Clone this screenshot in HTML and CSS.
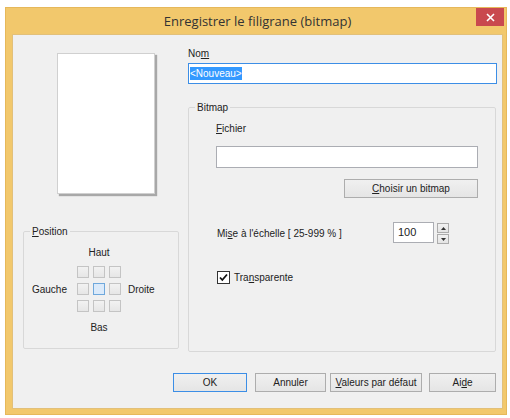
FILE: index.html
```html
<!DOCTYPE html>
<html lang="fr">
	<head>
		<meta charset="UTF-8" />
		<meta name="viewport" content="width=device-width, initial-scale=1.0" />
		<title>Enregistrer le filigrane (bitmap)</title>
		<link rel="stylesheet" href="styles.css">
	</head>
	<body>
		<div class="window">
			<div class="titlebar">
				<span class="title">Enregistrer le filigrane (bitmap)</span>
				<button class="close-button" aria-label="Fermer">
					<svg width="9" height="9" viewBox="0 0 9 9">
						<path d="M1 1 L8 8 M8 1 L1 8" stroke="#fff" stroke-width="1.6" />
					</svg>
				</button>
			</div>

			<div class="client">
				<div class="main">
					<div class="left-col">
						<div class="preview"></div>

						<fieldset class="group position-group">
							<legend><u>P</u>osition</legend>
							<div class="compass">
								<span class="haut">Haut</span>
								<span class="gauche">Gauche</span>
								<div class="cells">
									<span class="cell"></span>
									<span class="cell"></span>
									<span class="cell"></span>
									<span class="cell"></span>
									<span class="cell selected"></span>
									<span class="cell"></span>
									<span class="cell"></span>
									<span class="cell"></span>
									<span class="cell"></span>
								</div>
								<span class="droite">Droite</span>
								<span class="bas">Bas</span>
							</div>
						</fieldset>
					</div>

					<div class="right-col">
						<label class="name-label">No<u>m</u></label>
						<div class="textbox name-box"><span class="selection">&lt;Nouveau&gt;</span></div>

						<fieldset class="group bitmap-group">
							<legend>Bitmap</legend>
							<div class="bitmap-body">
								<label class="file-label"><u>F</u>ichier</label>
								<div class="textbox file-box"></div>
								<div class="choose-row">
									<button class="btn choose-btn"><u>C</u>hoisir un bitmap</button>
								</div>

								<div class="scale-row">
									<span class="scale-label">Mi<u>s</u>e à l'échelle [ 25-999 % ]</span>
									<div class="spin">
										<div class="textbox spin-box">100</div>
										<div class="spin-buttons">
											<span class="spin-btn">
												<svg width="5" height="3" viewBox="0 0 5 3"><path d="M0 3 L2.5 0 L5 3 Z" fill="#333" /></svg>
											</span>
											<span class="spin-btn">
												<svg width="5" height="3" viewBox="0 0 5 3"><path d="M0 0 L5 0 L2.5 3 Z" fill="#333" /></svg>
											</span>
										</div>
									</div>
								</div>

								<label class="check-row">
									<span class="checkbox">
										<svg width="11" height="11" viewBox="0 0 11 11">
											<path d="M2 5.5 L4.3 8 L9 2.5" fill="none" stroke="#111" stroke-width="1.8" />
										</svg>
									</span>
									<span>Tra<u>n</u>sparente</span>
								</label>
							</div>
						</fieldset>
					</div>
				</div>

				<div class="buttons">
					<button class="btn default-btn ok-btn">OK</button>
					<button class="btn cancel-btn">Annuler</button>
					<button class="btn defaults-btn"><u>V</u>aleurs par défaut</button>
					<button class="btn help-btn">Ai<u>d</u>e</button>
				</div>
			</div>
		</div>
	</body>
</html>
```

FILE: styles.css
```css
* {
	margin: 0;
	padding: 0;
	box-sizing: border-box;
}

body {
	background: #fff;
	font-family: "Liberation Sans", Arial, sans-serif;
	font-size: 10px;
	line-height: 13px;
	color: #222;
}

u {
	text-decoration: underline;
	text-underline-offset: 1px;
}

/* window frame */
.window {
	margin: 7px 0 0 5px;
	width: 502px;
	height: 408px;
	background: #f2c86c;
	border: 1px solid #e6b85a;
	padding: 0 3px 5px 6px;
	display: flex;
	flex-direction: column;
}

.titlebar {
	height: 26px;
	display: flex;
	align-items: center;
	justify-content: center;
	position: relative;
}

.title {
	font-family: "Open Sans", "Noto Sans", sans-serif;
	font-size: 13px;
	color: #333;
	margin-top: 1px;
}

.close-button {
	position: absolute;
	right: -1px;
	top: 0;
	width: 28px;
	height: 18px;
	border: none;
	background: #c9494e;
	display: flex;
	align-items: center;
	justify-content: center;
}

.client {
	flex: 1;
	background: #f0f0f0;
	border: 1px solid #e2c07a;
	display: flex;
	flex-direction: column;
}

.main {
	display: flex;
}

/* left column: preview and position */
.left-col {
	width: 175px;
	display: flex;
	flex-direction: column;
}

.preview {
	width: 98px;
	height: 141px;
	margin: 18px 0 0 44px;
	background: #fff;
	border: 1px solid #d0d0d0;
	box-shadow: 2px 2px 1px #a8a8a8;
}

.group {
	border: 1px solid #d8d8d8;
	border-radius: 2px;
}

.group legend {
	padding: 0 2px;
	margin-left: 6px;
	line-height: 13px;
}

.position-group {
	margin: 31px 0 0 10px;
	width: 156px;
	height: 124px;
}

.compass {
	display: grid;
	grid-template-columns: 53px 44px 1fr;
	margin-top: 8px;
}

.haut,
.bas {
	grid-column: 2;
	text-align: center;
}

.haut {
	margin-bottom: 7px;
}

.bas {
	margin-top: 9px;
}

.gauche {
	grid-column: 1;
	text-align: right;
	padding-right: 10px;
	align-self: center;
}

.droite {
	grid-column: 3;
	padding-left: 7px;
	align-self: center;
}

.cells {
	grid-column: 2;
	display: grid;
	grid-template-columns: repeat(3, 12px);
	grid-auto-rows: 12px;
	column-gap: 4px;
	row-gap: 5px;
}

.cell {
	border: 1px solid #c4c4c4;
	background: linear-gradient(#f2f2f2, #e6e6e6);
}

.cell.selected {
	border-color: #6fa8dc;
	background: #dbeafa;
}

/* right column: name and bitmap */
.right-col {
	width: 309px;
	display: flex;
	flex-direction: column;
}

.name-label {
	margin-top: 12px;
}

.textbox {
	background: #fff;
	border: 1px solid #abadb3;
}

.name-box {
	margin-top: 3px;
	height: 21px;
	border-color: #3c8ee6;
	padding: 3px 1px;
}

.selection {
	background: #3399ff;
	color: #fff;
	padding: 1px 0;
}

.bitmap-group {
	margin-top: 17px;
	width: 308px;
	height: 251px;
}

.bitmap-body {
	padding-left: 27px;
	display: flex;
	flex-direction: column;
}

.file-label {
	margin-top: 8px;
}

.file-box {
	margin-top: 11px;
	width: 262px;
	height: 22px;
}

.choose-row {
	display: flex;
	justify-content: flex-end;
	width: 262px;
	margin-top: 11px;
}

.btn {
	font-family: "Liberation Sans", Arial, sans-serif;
	font-size: 10px;
	color: #222;
	height: 19px;
	border: 1px solid #adadad;
	background: linear-gradient(#f0f0f0, #e5e5e5);
}

.choose-btn {
	width: 134px;
}

.scale-row {
	display: flex;
	align-items: center;
	margin-top: 24px;
}

.scale-label {
	width: 177px;
	padding-left: 1px;
}

.spin {
	display: flex;
	gap: 3px;
}

.spin-box {
	width: 41px;
	height: 21px;
	padding: 3px 4px;
	font-size: 11px;
}

.spin-buttons {
	display: flex;
	flex-direction: column;
	gap: 1px;
	padding-top: 1px;
}

.spin-btn {
	width: 12px;
	height: 10px;
	border: 1px solid #acacac;
	background: linear-gradient(#f2f2f2, #e4e4e4);
	display: flex;
	align-items: center;
	justify-content: center;
}

.check-row {
	display: flex;
	align-items: center;
	gap: 4px;
	margin-top: 27px;
	padding-left: 1px;
}

.checkbox {
	width: 13px;
	height: 13px;
	border: 1px solid #333;
	background: #fff;
	display: flex;
	align-items: center;
	justify-content: center;
}

/* dialog buttons */
.buttons {
	display: flex;
	margin: 21px 0 0 160px;
}

.default-btn {
	border-color: #3c8ee6;
}

.ok-btn {
	width: 74px;
}

.cancel-btn {
	width: 71px;
	margin-left: 8px;
}

.defaults-btn {
	width: 92px;
	margin-left: 4px;
}

.help-btn {
	width: 67px;
	margin-left: 7px;
}
```
